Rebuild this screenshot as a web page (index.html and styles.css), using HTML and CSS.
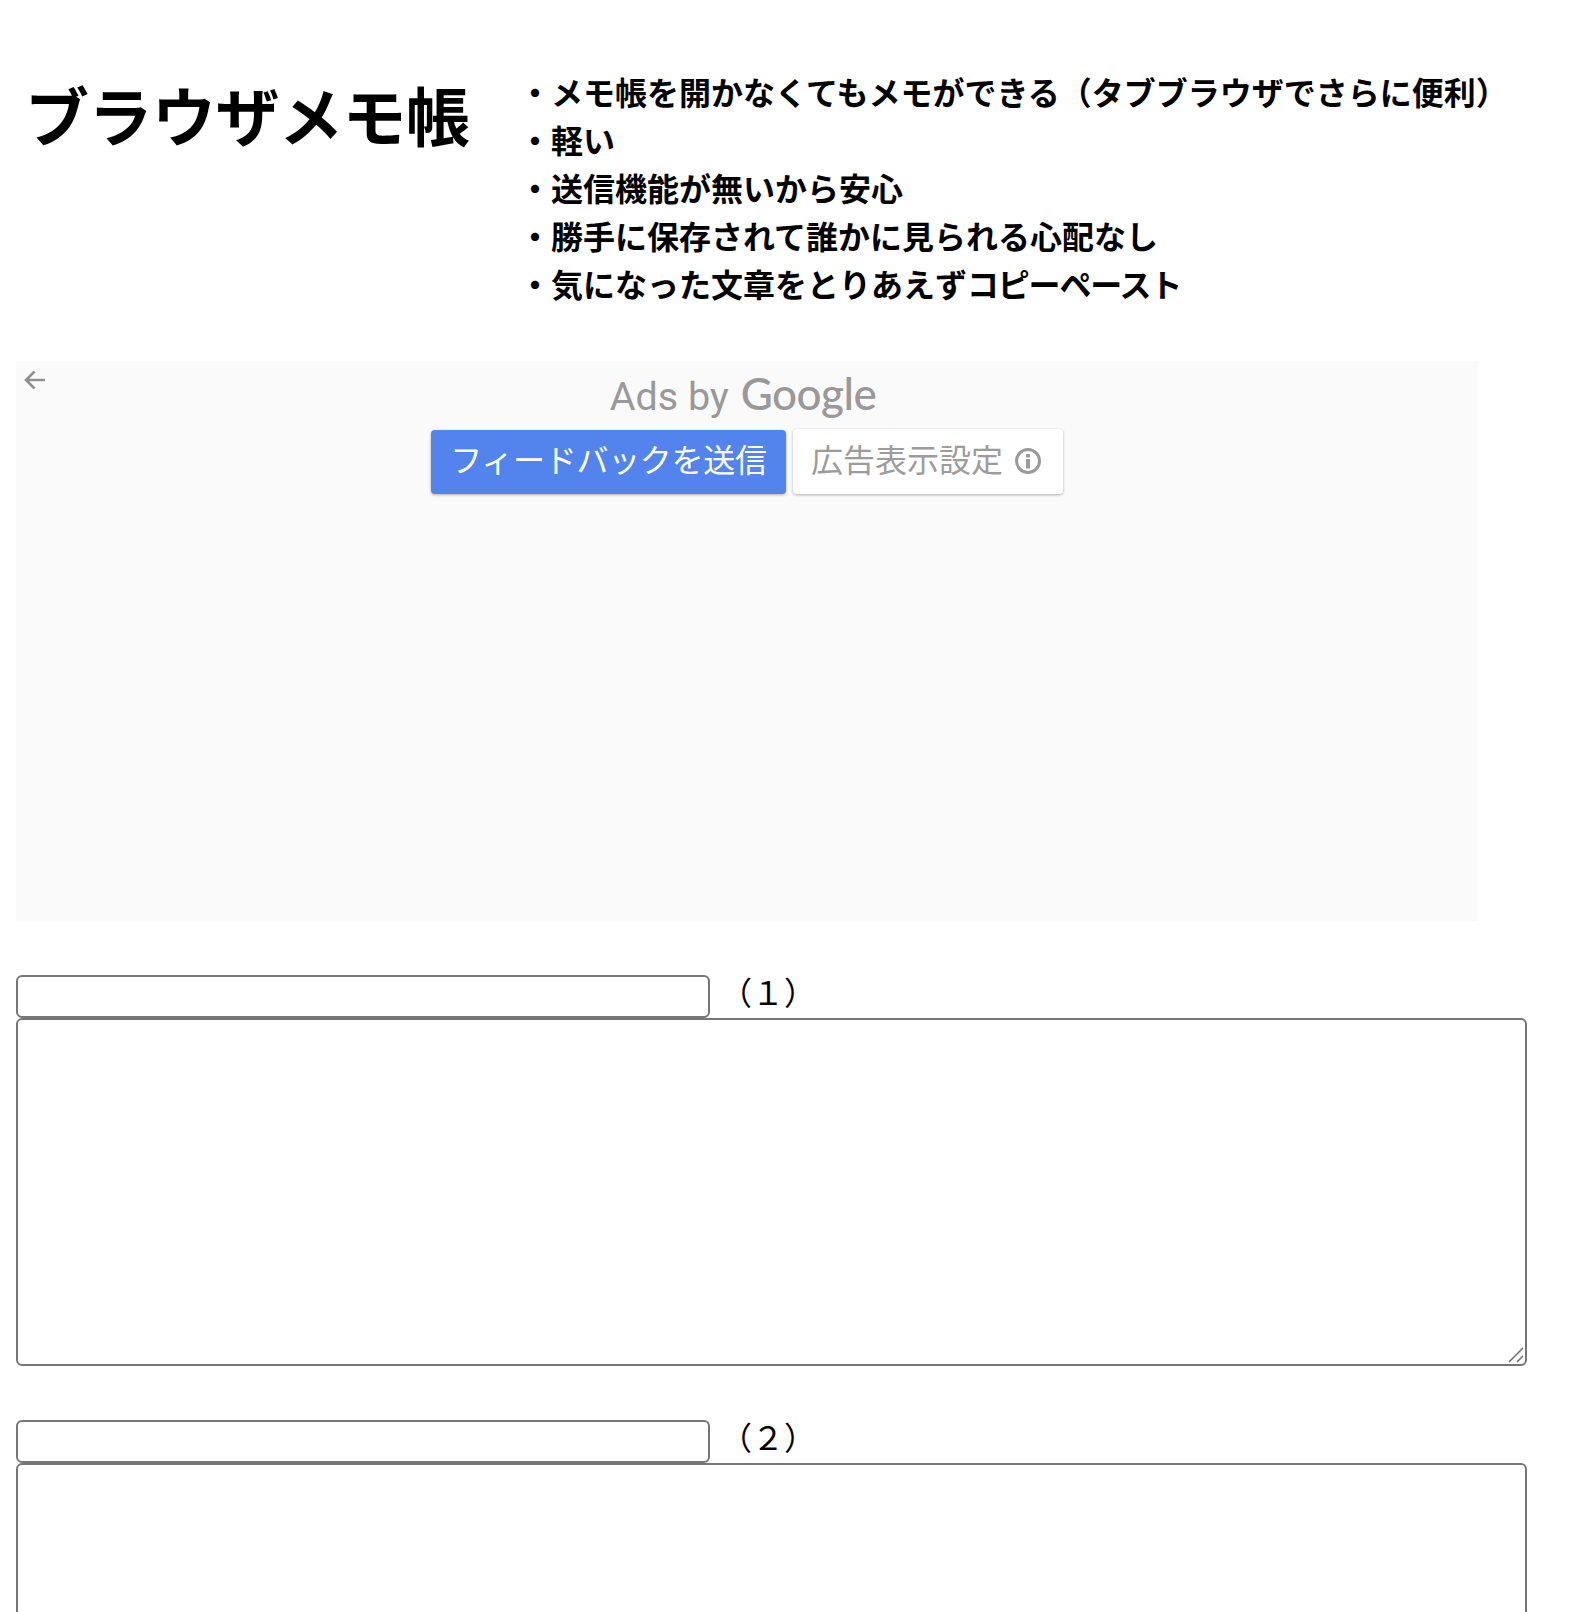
FILE: index.html
```html
<!DOCTYPE html>
<html lang="ja">
<head>
<meta charset="utf-8">
<title>ブラウザメモ帳</title>
<link rel="stylesheet" href="styles.css">
</head>
<body>
<header class="top">
  <h1 class="title">ブラウザメモ帳</h1>
  <ul class="points">
    <li>・メモ帳を開かなくてもメモができる（タブブラウザでさらに便利）</li>
    <li>・軽い</li>
    <li>・送信機能が無いから安心</li>
    <li>・勝手に保存されて誰かに見られる心配なし</li>
    <li>・気になった文章をとりあえず<span class="kana">コピーペースト</span></li>
  </ul>
</header>
<section class="ad">
  <svg class="back" viewBox="0 0 24 24" width="24" height="24" aria-hidden="true"><path d="M22 12H3M11.500 3.500 3 12l8.500 8.500" fill="none" stroke="#8f8f8f" stroke-width="2.600"/></svg>
  <div class="ad-label"><span class="ads-by">Ads by</span><span class="google">Google</span></div>
  <div class="ad-actions">
    <button class="btn-feedback" type="button">フィードバックを送信</button>
    <button class="btn-settings" type="button"><span class="settings-text">広告表示設定</span>
      <svg class="info" viewBox="0 0 28 28" width="28" height="28" aria-hidden="true"><circle cx="14" cy="14" r="11.500" fill="none" stroke="#9a9a9a" stroke-width="3"/><rect x="12" y="12" width="4" height="9.500" fill="#9a9a9a"/><rect x="12" y="7" width="4" height="3.500" fill="#9a9a9a"/></svg>
    </button>
  </div>
</section>
<main class="memos">
  <div class="memo">
    <div class="memo-head"><input class="memo-title" type="text"><span class="memo-no">（１）</span></div>
    <div class="memo-box">
      <textarea class="memo-body"></textarea>
      <svg class="grip" viewBox="0 0 20 20" width="20" height="20" aria-hidden="true"><path d="M2 16 16 2M10 16l6-6" fill="none" stroke="#6f6f6f" stroke-width="1.500"/></svg>
    </div>
  </div>
  <div class="memo">
    <div class="memo-head"><input class="memo-title" type="text"><span class="memo-no">（２）</span></div>
    <div class="memo-box">
      <textarea class="memo-body"></textarea>
      <svg class="grip" viewBox="0 0 20 20" width="20" height="20" aria-hidden="true"><path d="M2 16 16 2M10 16l6-6" fill="none" stroke="#6f6f6f" stroke-width="1.500"/></svg>
    </div>
  </div>
</main>
</body>
</html>
```
FILE: styles.css
```css
html, body {
  height: 100%;
  overflow: hidden;
}
body {
  margin: 0;
  padding: 0 16px;
  background: #fff;
  color: #000;
  font-family: "Noto Sans CJK JP", "Liberation Sans", sans-serif;
}
.top {
  display: flex;
  height: 361px;
  box-sizing: border-box;
  padding-top: 67px;
}
.title {
  width: 503px;
  flex: none;
  margin: -2px 0 0;
  padding-left: 9px;
  box-sizing: border-box;
  font-size: 64px;
  line-height: 96px;
  font-weight: 700;
  letter-spacing: -0.500px;
}
.points {
  margin: 0;
  padding: 0;
  list-style: none;
  font-size: 32px;
  line-height: 48px;
  font-weight: 700;
}
.kana {
  letter-spacing: -1.200px;
}
.ad {
  position: relative;
  width: 1462px;
  height: 560px;
  background: #fafafa;
  display: flex;
  flex-direction: column;
  align-items: center;
}
.back {
  position: absolute;
  left: 7px;
  top: 7px;
}
.ad-label {
  display: flex;
  align-items: baseline;
  gap: 12px;
  height: 68px;
  box-sizing: border-box;
  padding: 6px 8px 0 0;
  color: #999;
  font-family: Roboto, "Liberation Sans", sans-serif;
}
.ads-by {
  font-size: 39.500px;
}
.google {
  font-family: Lato, Roboto, sans-serif;
  font-size: 44px;
  font-weight: 500;
  letter-spacing: -0.500px;
}
.ad-actions {
  display: flex;
  align-items: flex-end;
  gap: 7px;
}
.btn-feedback, .btn-settings {
  border: 0;
  border-radius: 4px;
  font-family: "Noto Sans CJK JP", sans-serif;
  font-size: 32px;
  line-height: 46px;
  box-shadow: 0 1px 3px rgba(0, 0, 0, 0.3);
}
.btn-feedback {
  width: 355px;
  height: 64px;
  padding: 0 0 8px;
  background: #5383ec;
  color: #fff;
  letter-spacing: -0.300px;
}
.btn-settings {
  display: flex;
  align-items: center;
  gap: 11px;
  width: 270px;
  height: 65px;
  padding: 0 0 0 18px;
  background: #fff;
  color: #9c9c9c;
}
.settings-text {
  margin-bottom: 7px;
}
.info {
  margin-bottom: 2px;
}
.memos {
  padding-top: 54px;
  display: flex;
  flex-direction: column;
  gap: 54px;
}
.memo {
  display: flex;
  flex-direction: column;
}
.memo-head {
  display: flex;
  align-items: flex-start;
  height: 43px;
}
.memo-title {
  width: 694px;
  height: 43px;
  box-sizing: border-box;
  margin: 0;
  padding: 2px 4px;
  border: 2px solid #767676;
  border-radius: 6px;
  background: #fff;
  font-size: 26px;
}
.memo-no {
  margin-left: 10px;
  font-size: 32px;
  line-height: 32px;
}
.memo-box {
  position: relative;
  width: 1511px;
  height: 348px;
}
.memo-body {
  display: block;
  width: 100%;
  height: 100%;
  box-sizing: border-box;
  margin: 0;
  padding: 4px;
  border: 2px solid #767676;
  border-radius: 6px;
  background: #fff;
  font-size: 26px;
  resize: none;
}
.grip {
  position: absolute;
  right: 0;
  bottom: 0;
  pointer-events: none;
}
```
